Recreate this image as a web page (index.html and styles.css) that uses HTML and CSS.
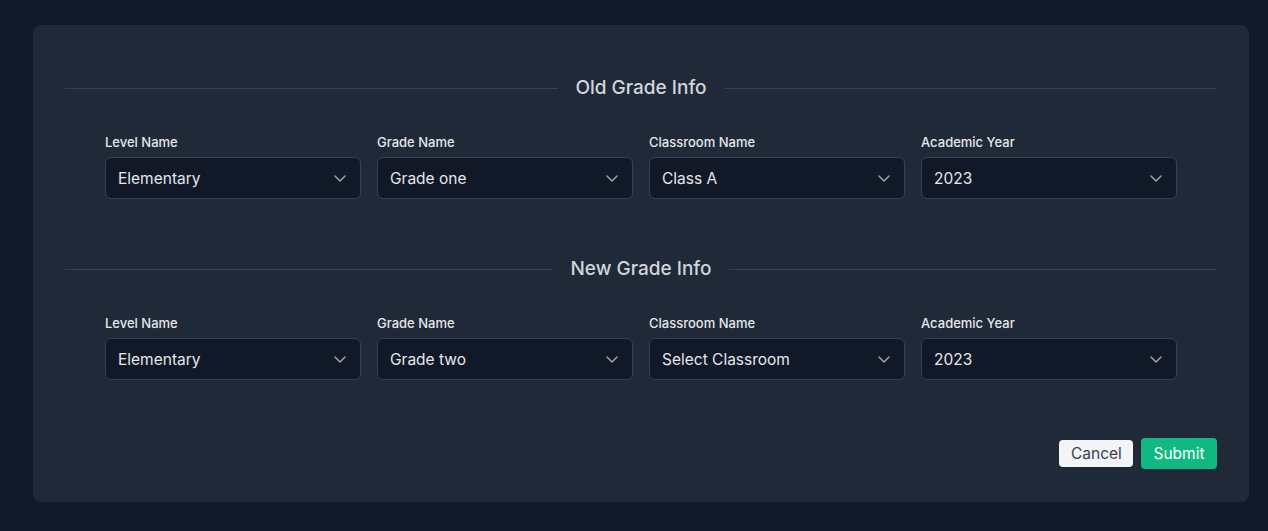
FILE: index.html
```html
<!DOCTYPE html>
<html lang="en">
<head>
<meta charset="utf-8">
<title>Grade Transfer</title>
<link rel="stylesheet" href="styles.css">
</head>
<body>
<div class="page">
  <form class="card">
    <section class="section">
      <div class="divider"><span class="divider-title">Old Grade Info</span></div>
      <div class="grid">
        <div class="field"><label class="label">Level Name</label><div class="select"><span>Elementary</span><svg class="chev" viewBox="0 0 12 7" width="12" height="7"><path d="M1 1l5 5 5-5" fill="none" stroke="currentColor" stroke-width="1.5" stroke-linecap="round" stroke-linejoin="round"/></svg></div></div>
        <div class="field"><label class="label">Grade Name</label><div class="select"><span>Grade one</span><svg class="chev" viewBox="0 0 12 7" width="12" height="7"><path d="M1 1l5 5 5-5" fill="none" stroke="currentColor" stroke-width="1.5" stroke-linecap="round" stroke-linejoin="round"/></svg></div></div>
        <div class="field"><label class="label">Classroom Name</label><div class="select"><span>Class A</span><svg class="chev" viewBox="0 0 12 7" width="12" height="7"><path d="M1 1l5 5 5-5" fill="none" stroke="currentColor" stroke-width="1.5" stroke-linecap="round" stroke-linejoin="round"/></svg></div></div>
        <div class="field"><label class="label">Academic Year</label><div class="select"><span>2023</span><svg class="chev" viewBox="0 0 12 7" width="12" height="7"><path d="M1 1l5 5 5-5" fill="none" stroke="currentColor" stroke-width="1.5" stroke-linecap="round" stroke-linejoin="round"/></svg></div></div>
      </div>
    </section>
    <section class="section">
      <div class="divider"><span class="divider-title">New Grade Info</span></div>
      <div class="grid">
        <div class="field"><label class="label">Level Name</label><div class="select"><span>Elementary</span><svg class="chev" viewBox="0 0 12 7" width="12" height="7"><path d="M1 1l5 5 5-5" fill="none" stroke="currentColor" stroke-width="1.5" stroke-linecap="round" stroke-linejoin="round"/></svg></div></div>
        <div class="field"><label class="label">Grade Name</label><div class="select"><span>Grade two</span><svg class="chev" viewBox="0 0 12 7" width="12" height="7"><path d="M1 1l5 5 5-5" fill="none" stroke="currentColor" stroke-width="1.5" stroke-linecap="round" stroke-linejoin="round"/></svg></div></div>
        <div class="field"><label class="label">Classroom Name</label><div class="select"><span>Select Classroom</span><svg class="chev" viewBox="0 0 12 7" width="12" height="7"><path d="M1 1l5 5 5-5" fill="none" stroke="currentColor" stroke-width="1.5" stroke-linecap="round" stroke-linejoin="round"/></svg></div></div>
        <div class="field"><label class="label">Academic Year</label><div class="select"><span>2023</span><svg class="chev" viewBox="0 0 12 7" width="12" height="7"><path d="M1 1l5 5 5-5" fill="none" stroke="currentColor" stroke-width="1.5" stroke-linecap="round" stroke-linejoin="round"/></svg></div></div>
      </div>
    </section>
    <div class="actions">
      <button type="button" class="btn btn-cancel">Cancel</button>
      <button type="button" class="btn btn-submit">Submit</button>
    </div>
  </form>
</div>
</body>
</html>
```
FILE: styles.css
```css
* { box-sizing: border-box; }
html, body { margin: 0; padding: 0; }
body {
  background: #111827;
  font-family: Inter, "Noto Sans", sans-serif;
  color: #e5e7eb;
}
.page {
  padding: 25px 19px 30px 33px;
}
.card {
  background: #1f2937;
  border-radius: 8px;
  padding: 49px 32px 33px;
  display: flex;
  flex-direction: column;
  gap: 56px;
}
.divider {
  display: flex;
  align-items: center;
  gap: 17px;
  height: 28px;
}
.divider::before, .divider::after {
  content: "";
  flex: 1;
  height: 1px;
  background: #374151;
}
.divider-title {
  font-size: 19px;
  font-weight: 500;
  color: #d1d5db;
  line-height: 28px;
}
.grid {
  margin-top: 30px;
  padding: 0 40px;
  display: grid;
  grid-template-columns: repeat(4, 1fr);
  gap: 16px;
}
.field {
  display: flex;
  flex-direction: column;
}
.label {
  font-size: 13px;
  font-weight: 500;
  line-height: 20px;
  color: #e5e7eb;
  margin-bottom: 5px;
}
.select {
  height: 42px;
  background: #111827;
  border: 1px solid #374151;
  border-radius: 6px;
  display: flex;
  align-items: center;
  justify-content: space-between;
  padding: 0 14px 0 12px;
  font-size: 15.5px;
  color: #e5e7eb;
}
.chev {
  color: #9ca3af;
  display: block;
}
.actions {
  display: flex;
  justify-content: flex-end;
  align-items: center;
  gap: 8px;
  margin-top: 2px;
}
.btn {
  font-family: inherit;
  font-size: 15.5px;
  border: none;
  border-radius: 4px;
  cursor: pointer;
  padding: 0 12px;
}
.btn-cancel {
  background: #f3f4f6;
  color: #374151;
  height: 27px;
  width: 74px;
}
.btn-submit {
  background: #10b981;
  color: #ffffff;
  height: 31px;
  width: 76px;
}
```
